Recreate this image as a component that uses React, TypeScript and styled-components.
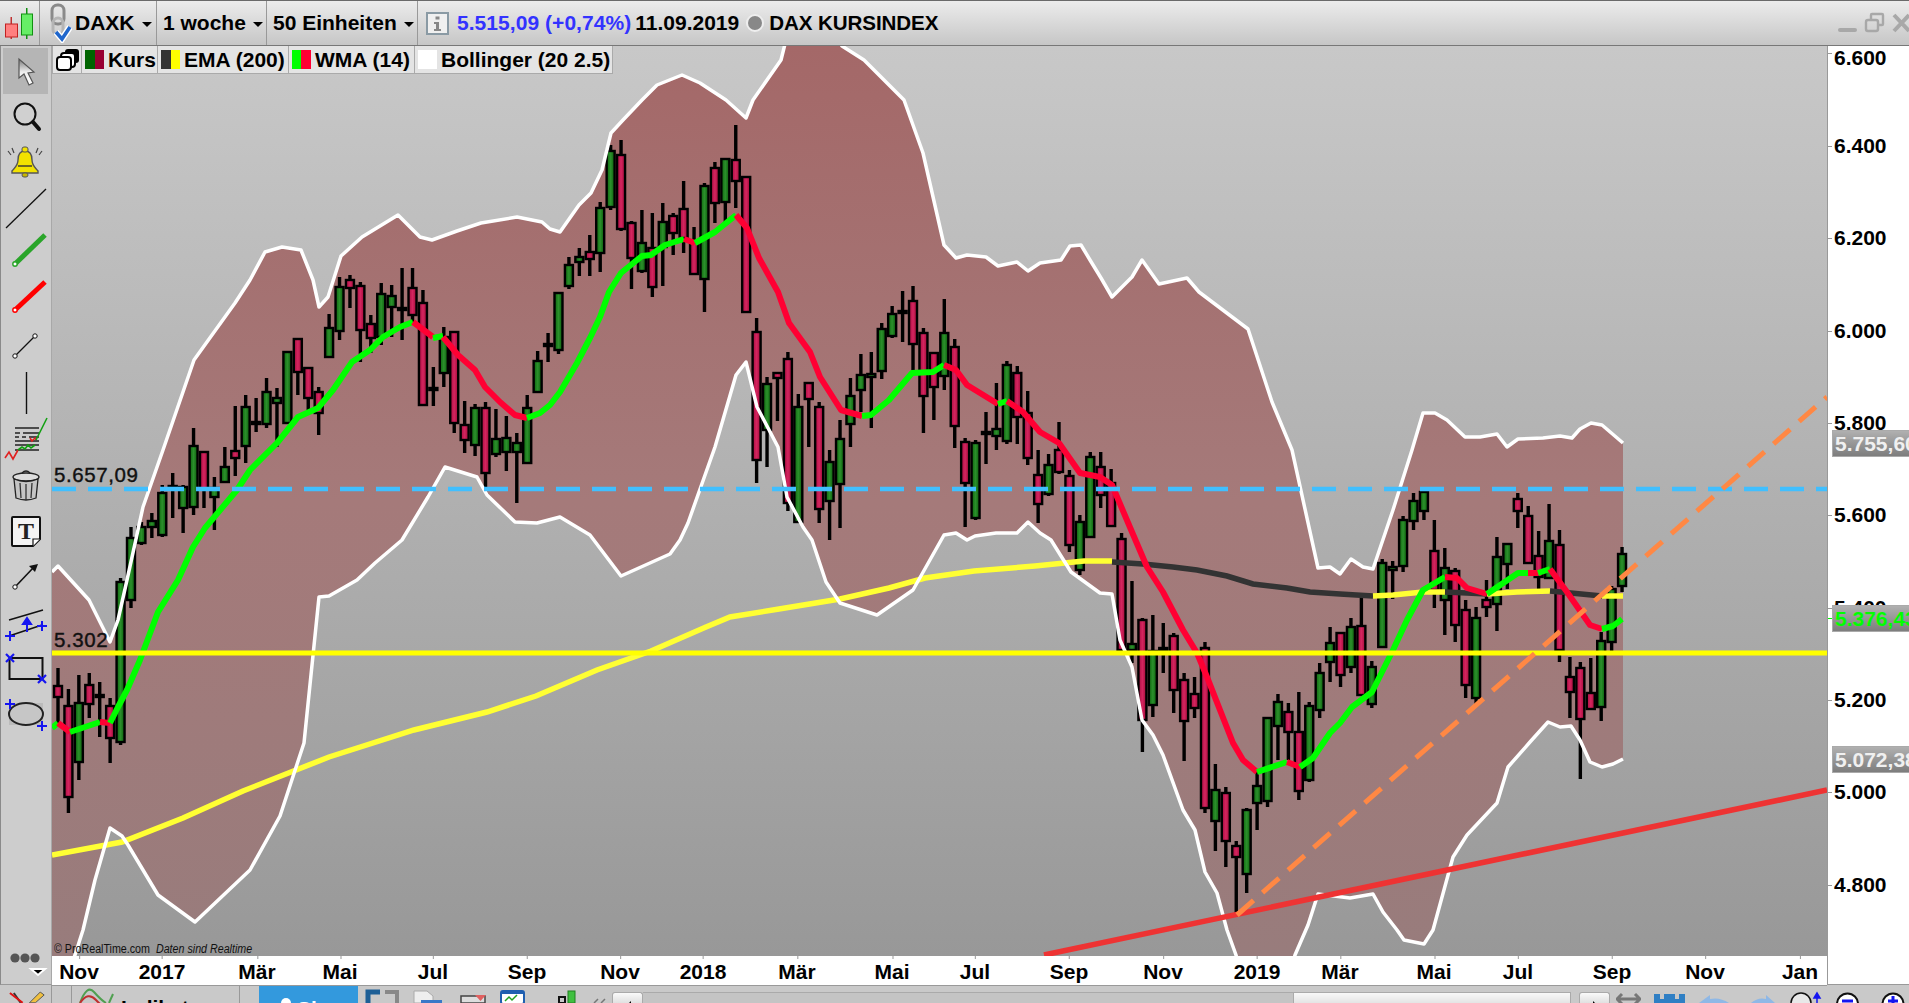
import styled, { createGlobalStyle } from "styled-components";

type Pt = [number, number];
type Seg = [string, Pt[]];
// colour, wick top, wick bottom, body top, body bottom
type Candle = ["g" | "r", number, number, number, number];

const GREEN = "#00ff00";
const RED = "#ff0033";
const YEL = "#ffff33";
const DARK = "#333333";
const BLUE = "#1515f0";

const CANDLES: Candle[] = [
    ["r", 668, 727, 686, 697], ["r", 689, 813, 706, 797], ["g", 675, 780, 703, 762], ["r", 673, 718, 685, 704],
    ["r", 682, 737, 695, 697], ["r", 698, 763, 706, 738], ["g", 578, 745, 582, 742], ["g", 527, 608, 538, 600],
    ["g", 522, 545, 527, 543], ["g", 513, 538, 521, 527], ["g", 485, 537, 493, 535], ["g", 473, 518, 486, 488],
    ["g", 485, 533, 487, 508], ["g", 428, 515, 446, 507], ["r", 452, 508, 452, 489], ["g", 477, 530, 488, 497],
    ["g", 447, 483, 467, 482], ["r", 406, 476, 451, 458], ["g", 395, 463, 407, 446], ["g", 398, 432, 422, 424],
    ["g", 378, 428, 392, 424], ["g", 388, 447, 398, 403], ["g", 352, 424, 352, 423], ["r", 339, 395, 339, 372],
    ["r", 368, 410, 368, 398], ["r", 387, 435, 392, 413], ["g", 314, 358, 328, 357], ["g", 277, 340, 287, 331],
    ["r", 275, 308, 280, 288], ["r", 282, 362, 286, 330], ["r", 315, 353, 324, 338], ["g", 283, 345, 294, 337],
    ["g", 285, 337, 296, 307], ["r", 268, 340, 308, 310], ["r", 268, 322, 288, 315], ["r", 290, 405, 303, 405],
    ["r", 367, 406, 388, 390], ["g", 327, 387, 337, 373], ["r", 332, 433, 332, 423], ["r", 401, 453, 425, 440],
    ["g", 404, 456, 408, 445], ["r", 402, 490, 408, 473], ["g", 409, 457, 439, 454], ["g", 416, 471, 438, 452],
    ["g", 433, 503, 443, 452], ["g", 395, 463, 408, 463], ["g", 351, 392, 361, 392], ["r", 333, 362, 344, 346],
    ["g", 293, 354, 293, 350], ["g", 257, 289, 265, 286], ["g", 248, 276, 257, 262], ["r", 235, 276, 252, 259],
    ["g", 202, 272, 208, 253], ["g", 145, 210, 151, 207], ["r", 140, 231, 155, 229], ["r", 221, 289, 223, 258],
    ["g", 210, 273, 243, 271], ["r", 213, 297, 248, 287], ["g", 203, 286, 222, 247], ["r", 213, 255, 216, 233],
    ["r", 181, 253, 209, 238], ["r", 227, 275, 242, 274], ["g", 183, 312, 186, 279], ["r", 162, 223, 168, 203],
    ["g", 158, 222, 159, 202], ["r", 125, 208, 160, 181], ["r", 177, 312, 177, 312], ["r", 318, 483, 332, 460],
    ["g", 377, 467, 384, 430], ["r", 372, 421, 373, 378], ["r", 352, 511, 359, 503], ["g", 394, 522, 407, 522],
    ["r", 383, 447, 383, 399], ["r", 402, 523, 407, 509], ["g", 450, 540, 462, 501], ["g", 420, 528, 439, 484],
    ["g", 378, 447, 396, 424], ["g", 354, 412, 375, 390], ["g", 352, 428, 374, 377], ["g", 323, 379, 329, 371],
    ["g", 306, 338, 314, 336], ["r", 291, 342, 311, 313], ["r", 286, 370, 301, 344], ["r", 328, 433, 333, 396],
    ["r", 352, 420, 353, 387], ["g", 299, 390, 333, 376], ["r", 339, 448, 347, 426], ["r", 438, 527, 442, 483],
    ["g", 440, 520, 443, 518], ["g", 412, 464, 432, 434], ["g", 383, 450, 429, 436], ["g", 361, 444, 365, 441],
    ["r", 366, 444, 373, 417], ["r", 391, 465, 413, 458], ["r", 450, 523, 475, 504], ["g", 454, 496, 465, 494],
    ["r", 422, 474, 450, 472], ["r", 470, 552, 476, 545], ["g", 515, 575, 522, 570], ["g", 452, 538, 457, 537],
    ["r", 452, 508, 467, 495], ["r", 469, 527, 483, 526], ["r", 533, 650, 539, 650], ["g", 581, 663, 644, 650],
    ["r", 618, 752, 620, 720], ["g", 615, 717, 651, 705], ["g", 623, 673, 648, 650], ["r", 633, 713, 636, 690],
    ["r", 673, 761, 680, 721], ["r", 677, 718, 694, 708], ["r", 642, 813, 648, 808], ["g", 764, 851, 790, 821],
    ["r", 787, 867, 793, 841], ["r", 841, 915, 846, 857], ["g", 808, 893, 810, 874], ["g", 772, 830, 786, 803],
    ["g", 717, 807, 718, 801], ["g", 694, 760, 702, 726], ["r", 703, 760, 712, 732], ["r", 692, 800, 732, 791],
    ["g", 702, 782, 706, 780], ["g", 663, 718, 673, 710], ["g", 627, 682, 643, 662], ["r", 633, 687, 633, 675],
    ["g", 618, 673, 627, 667], ["r", 598, 696, 626, 695], ["g", 661, 708, 667, 704], ["g", 559, 647, 563, 647],
    ["g", 561, 599, 567, 570], ["g", 516, 572, 520, 566], ["g", 493, 530, 501, 521], ["g", 489, 520, 492, 511],
    ["r", 520, 608, 551, 590], ["g", 548, 635, 568, 600], ["r", 568, 642, 571, 625], ["r", 600, 698, 610, 685],
    ["g", 607, 705, 618, 698], ["r", 580, 617, 600, 607], ["g", 537, 631, 557, 604], ["g", 543, 589, 544, 564],
    ["r", 493, 528, 499, 511], ["r", 506, 563, 516, 563], ["r", 531, 590, 556, 577], ["g", 504, 578, 541, 578],
    ["r", 530, 662, 545, 650], ["r", 657, 718, 677, 692], ["r", 662, 779, 668, 719], ["r", 658, 709, 693, 709],
    ["g", 632, 721, 641, 707], ["g", 586, 651, 589, 642], ["g", 547, 592, 554, 586],
];

const UPPER: Pt[] = [
    [52, 572], [58, 566], [89, 600], [110, 642], [118, 620], [127, 580], [143, 507], [163, 450], [194, 360],
    [235, 303], [250, 280], [265, 252], [282, 247], [301, 250], [313, 280], [319, 307], [328, 297], [341, 256],
    [362, 237], [398, 215], [420, 237], [432, 240], [457, 231], [481, 223], [517, 217], [542, 222], [550, 229],
    [560, 232], [579, 205], [591, 193], [602, 170], [611, 133], [623, 120], [642, 100], [657, 85], [682, 75],
    [700, 83], [726, 100], [746, 118], [753, 100], [781, 60], [785, 44], [838, 40], [842, 46], [864, 60], [904, 100],
    [923, 153], [944, 245], [956, 258], [967, 255], [986, 257], [998, 266], [1017, 262], [1028, 271], [1040, 263],
    [1061, 260], [1070, 246], [1081, 245], [1090, 260], [1101, 278], [1112, 297], [1132, 277], [1142, 260],
    [1159, 284], [1187, 278], [1199, 292], [1248, 329], [1272, 402], [1292, 450], [1318, 568], [1330, 567],
    [1340, 574], [1351, 559], [1363, 567], [1373, 569], [1393, 510], [1412, 450], [1423, 413], [1435, 413],
    [1447, 420], [1465, 437], [1480, 437], [1497, 434], [1507, 447], [1518, 439], [1543, 438], [1560, 436],
    [1572, 438], [1580, 429], [1591, 423], [1602, 425], [1623, 443],
];

const LOWER: Pt[] = [
    [52, 1010], [75, 955], [83, 930], [95, 880], [110, 828], [122, 836], [128, 845], [158, 895], [195, 922],
    [250, 870], [280, 816], [304, 743], [319, 597], [329, 596], [357, 580], [375, 563], [402, 540], [428, 497],
    [445, 467], [477, 477], [487, 495], [515, 522], [537, 523], [560, 517], [590, 535], [621, 576], [670, 554],
    [680, 540], [688, 523], [715, 447], [736, 375], [746, 362], [757, 407], [778, 447], [787, 497], [803, 527],
    [812, 540], [826, 582], [840, 603], [877, 615], [913, 590], [944, 535], [956, 533], [967, 540], [975, 536], [996, 533],
    [1017, 533], [1028, 522], [1040, 533], [1051, 540], [1071, 572], [1100, 593], [1112, 594], [1120, 640],
    [1132, 667], [1142, 720], [1153, 735], [1163, 755], [1183, 810], [1195, 830], [1205, 872], [1217, 893],
    [1227, 930], [1236, 955], [1245, 990], [1285, 990], [1295, 955], [1308, 925], [1318, 894], [1350, 898],
    [1373, 894], [1383, 912], [1397, 930], [1404, 940], [1424, 944], [1433, 930], [1453, 857], [1467, 835],
    [1497, 803], [1508, 767], [1530, 742], [1548, 722], [1560, 727], [1571, 726], [1580, 740], [1590, 762],
    [1602, 767], [1613, 764], [1623, 759],
];

const EMA: Seg[] = [
    [YEL, [[52, 855], [122, 842], [183, 818], [243, 791], [329, 757], [414, 730], [487, 712], [536, 696], [597, 670], [651, 651], [706, 627], [730, 617], [779, 609], [840, 599], [889, 588], [925, 578], [974, 571], [1035, 566], [1084, 561], [1112, 561]]],
    [DARK, [[1112, 562], [1143, 564], [1173, 567], [1197, 570], [1227, 576], [1253, 584], [1287, 588], [1310, 592], [1340, 594], [1373, 596]]],
    [YEL, [[1373, 596], [1393, 595], [1423, 592], [1445, 592]]],
    [DARK, [[1445, 592], [1467, 593], [1487, 594]]],
    [YEL, [[1487, 594], [1517, 592], [1550, 591]]],
    [DARK, [[1550, 591], [1602, 596]]],
    [YEL, [[1602, 596], [1623, 596]]],
];

const WMA: Seg[] = [
    [GREEN, [[52, 728], [58, 723]]],
    [RED, [[58, 723], [70, 732]]],
    [GREEN, [[70, 732], [100, 722]]],
    [RED, [[100, 722], [110, 723]]],
    [GREEN, [[110, 723], [118, 707], [127, 690], [140, 660], [158, 612], [178, 580], [193, 547], [205, 528], [237, 490], [250, 470], [277, 443], [298, 417], [318, 408], [333, 390], [352, 362], [370, 350], [383, 337], [400, 327], [413, 322]]],
    [RED, [[413, 322], [433, 337]]],
    [GREEN, [[433, 338], [443, 336]]],
    [RED, [[443, 337], [458, 355], [475, 370], [485, 387], [500, 402], [515, 415], [527, 418]]],
    [GREEN, [[527, 418], [540, 413], [550, 405], [560, 392], [577, 363], [590, 338], [600, 317], [609, 292], [621, 273], [642, 256], [651, 255], [665, 245], [684, 239]]],
    [RED, [[684, 239], [695, 243]]],
    [GREEN, [[695, 243], [715, 232], [736, 215]]],
    [RED, [[736, 215], [747, 228], [759, 258], [778, 292], [789, 323], [810, 352], [820, 377], [841, 410], [862, 416]]],
    [GREEN, [[862, 416], [871, 415], [889, 400], [912, 373], [933, 372], [944, 365]]],
    [RED, [[944, 365], [956, 370], [967, 385], [998, 404]]],
    [GREEN, [[998, 404], [1007, 401]]],
    [RED, [[1007, 401], [1023, 412], [1040, 432], [1059, 443], [1080, 473], [1100, 477], [1112, 485], [1132, 532], [1147, 567], [1163, 592], [1183, 630], [1197, 653], [1207, 677], [1233, 743], [1243, 760], [1257, 772]]],
    [GREEN, [[1257, 772], [1287, 762]]],
    [RED, [[1287, 762], [1300, 767]]],
    [GREEN, [[1300, 767], [1313, 758], [1330, 733], [1340, 723], [1352, 707], [1372, 692], [1393, 650], [1407, 620], [1423, 590], [1445, 577]]],
    [RED, [[1445, 577], [1457, 578], [1467, 588], [1487, 594]]],
    [GREEN, [[1487, 594], [1518, 573], [1528, 573]]],
    [RED, [[1528, 573], [1538, 573]]],
    [GREEN, [[1538, 573], [1550, 569]]],
    [RED, [[1550, 569], [1567, 592], [1590, 625], [1602, 629]]],
    [GREEN, [[1602, 629], [1613, 626], [1622, 619]]],
];

const Y_TICKS: { y: number; label: string; labelY?: number }[] = [
    { y: 53, label: "6.600", labelY: 58 }, { y: 146, label: "6.400" }, { y: 238, label: "6.200" }, { y: 331, label: "6.000" },
    { y: 423, label: "5.800" }, { y: 515, label: "5.600" }, { y: 608, label: "5.400" }, { y: 700, label: "5.200" },
    { y: 792, label: "5.000" }, { y: 885, label: "4.800" },
];

const X_TICKS: [number, string][] = [
    [79, "Nov"], [162, "2017"], [257, "Mär"], [340, "Mai"], [433, "Jul"], [527, "Sep"], [620, "Nov"], [703, "2018"],
    [797, "Mär"], [892, "Mai"], [975, "Jul"], [1069, "Sep"], [1163, "Nov"], [1257, "2019"], [1340, "Mär"], [1434, "Mai"],
    [1518, "Jul"], [1612, "Sep"], [1705, "Nov"], [1800, "Jan"],
];

const pts = (p: Pt[]) => p.map((q) => q.join(",")).join(" ");

function App() {
    return (
        <Page>
            <GlobalStyle />
            <TopBar>
                <TopCell $w={40}>
                    <svg width="36" height="44" viewBox="0 1 36 44">
                        <rect x="10.5" y="17" width="1.5" height="22" fill="#c03030" />
                        <rect x="5.5" y="24" width="12" height="13" fill="#ff7f7f" stroke="#c02020" />
                        <rect x="26" y="8" width="1.5" height="31" fill="#109010" />
                        <rect x="21.5" y="14" width="11" height="21" fill="#66ee66" stroke="#109010" />
                    </svg>
                </TopCell>
                <TopCell $w={117} $pad={8} $gap={3}>
                    <svg width="24" height="40" viewBox="0 0 24 40">
                        <rect x="4" y="2" width="12" height="19" rx="5.5" fill="none" stroke="#8a8a8a" strokeWidth="3" />
                        <rect x="5" y="15" width="10" height="17" rx="5" fill="none" stroke="#b5b5b5" strokeWidth="3" />
                        <path d="M8 29l6 7L22 24" fill="none" stroke="#fff" strokeWidth="6.5" />
                        <path d="M8 29l6 7L22 24" fill="none" stroke="#1f66cc" strokeWidth="3.5" />
                    </svg>
                    <TopText>DAXK</TopText>
                    <Caret />
                </TopCell>
                <TopCell $w={110} $pad={6}>
                    <TopText>1 woche</TopText>
                    <Caret />
                </TopCell>
                <TopCell $w={151} $pad={6}>
                    <TopText>50 Einheiten</TopText>
                    <Caret />
                </TopCell>
                <InfoCell>
                    <svg width="23" height="23" viewBox="0 0 23 23">
                        <rect x="1" y="1" width="21" height="21" fill="#f0f0f0" stroke="#8a9aa4" strokeWidth="2" />
                        <rect x="9.5" y="4.5" width="4" height="3" fill="#888" />
                        <path d="M8 10h5v7h2v2H8v-2h2v-5H8z" fill="#888" />
                    </svg>
                    <Quote>5.515,09 (+0,74%)</Quote>
                    <TopText>11.09.2019</TopText>
                    <StatusDot />
                    <Instrument>DAX KURSINDEX</Instrument>
                </InfoCell>
                <WindowButtons>
                    <svg width="71" height="46" viewBox="1838 0 71 46">
                        <rect x="1838" y="28" width="19" height="4" rx="2" fill="#a8a8a8" />
                        <g fill="none" stroke="#a8a8a8" strokeWidth="2.4">
                            <rect x="1866" y="20" width="12" height="11" rx="2" />
                            <path d="M1871 20v-5a1 1 0 0 1 1-1h10a1 1 0 0 1 1 1v9a1 1 0 0 1-1 1h-4" />
                        </g>
                        <path d="M1894 15l15 16M1909 15l-15 16" stroke="#a8a8a8" strokeWidth="4" />
                    </svg>
                </WindowButtons>
            </TopBar>
            <Middle>
                <ToolBar>
                    <ToolList>
                        <Tool $active $top={48} $h={46}>
                            <defs>
                                <linearGradient id="ptr" x1="0" y1="0" x2="0" y2="1">
                                    <stop offset="0" stopColor="#777" />
                                    <stop offset="0.5" stopColor="#eee" />
                                    <stop offset="1" stopColor="#fff" />
                                </linearGradient>
                            </defs>
                            <path d="M19 59v19l5-4 5 11 4-2-5-10 6-1z" fill="url(#ptr)" stroke="#555" strokeWidth="1.2" />
                        </Tool>
                        <Tool $top={94} $h={46}>
                            <circle cx="25" cy="114" r="10.5" fill="#d0d0d0" stroke="#111" strokeWidth="2" />
                            <path d="M33 122l6 7" stroke="#111" strokeWidth="4" strokeLinecap="round" />
                        </Tool>
                        <Tool $top={140} $h={44}>
                            <path d="M25 151c-6 0-7 5-7 9 0 6-4 8-6 11v2h26v-2c-2-3-6-5-6-11 0-4-1-9-7-9z" fill="#f2e200" stroke="#555" strokeWidth="1.4" />
                            <rect x="22" y="147" width="6" height="5" rx="2" fill="#f2e200" stroke="#555" />
                            <rect x="22" y="173" width="6" height="4" rx="2" fill="#c8b800" stroke="#555" />
                            <path d="M18 166h14" stroke="#333" strokeWidth="1.4" />
                            <path d="M8 151l3 4M12 148l2 5M42 151l-3 4M38 148l-2 5" stroke="#444" strokeWidth="1.2" />
                        </Tool>
                        <Tool $top={184} $h={48}>
                            <path d="M6 228l40-39" stroke="#111" strokeWidth="1.3" />
                        </Tool>
                        <Tool $top={232} $h={38}>
                            <path d="M15 264l30-29" stroke="#2aa52a" strokeWidth="5" />
                            <circle cx="15" cy="264" r="2.2" fill="#fff" stroke="#2aa52a" strokeWidth="1.4" />
                        </Tool>
                        <Tool $top={270} $h={50}>
                            <path d="M15 310l30-28" stroke="#ff0000" strokeWidth="5" />
                            <circle cx="15" cy="310" r="2.2" fill="#fff" stroke="#ff0000" strokeWidth="1.4" />
                        </Tool>
                        <Tool $top={320} $h={50}>
                            <path d="M15 356l20-20" stroke="#111" strokeWidth="1.3" />
                            <circle cx="15" cy="356" r="2.2" fill="#fff" stroke="#111" />
                            <circle cx="35" cy="336" r="2.2" fill="#fff" stroke="#111" />
                        </Tool>
                        <Tool $top={370} $h={46}>
                            <path d="M26.5 372v42" stroke="#111" strokeWidth="1.4" />
                        </Tool>
                        <Tool $top={416} $h={48}>
                            <path d="M15 428h24M15 433h5M23 433h16M15 437h4M22 437h4M29 437h10M15 441h24M15 445h24M15 450h24" stroke="#222" strokeWidth="1.6" />
                            <path d="M5 458l4-6 4 7 5-9" fill="none" stroke="#e02020" strokeWidth="1.6" />
                            <path d="M18 450l4-3 3 2 3-4 3 3 4-3" fill="none" stroke="#10a010" strokeWidth="1.6" />
                            <path d="M30 438l2 3 3-3 1 2" fill="none" stroke="#e02020" strokeWidth="1.6" />
                            <path d="M36 440l4-8 3-6 4-8" fill="none" stroke="#10a010" strokeWidth="1.6" />
                        </Tool>
                        <Tool $top={464} $h={42}>
                            <ellipse cx="26" cy="477" rx="13" ry="4" fill="#ddd" stroke="#222" strokeWidth="1.3" />
                            <path d="M22 473q4-4 8 0" fill="none" stroke="#222" strokeWidth="1.3" />
                            <path d="M14 479l2 19q10 4 20 0l2-19q-12 5-24 0z" fill="#c4c4c4" stroke="#222" strokeWidth="1.3" />
                            <path d="M20 483l1 15M26 484v16M32 483l-1 15" stroke="#333" strokeWidth="1.3" />
                        </Tool>
                        <Tool $top={506} $h={46}>
                            <path d="M13 517h26a1 1 0 0 1 1 1v21l-7 7H13a1 1 0 0 1-1-1v-27a1 1 0 0 1 1-1z" fill="#f4f4f4" stroke="#111" strokeWidth="2" />
                            <path d="M33 546v-7h7" fill="#fff" stroke="#111" strokeWidth="1.2" />
                            <IconLetter x="26" y="539" textAnchor="middle">T</IconLetter>
                        </Tool>
                        <Tool $top={552} $h={48}>
                            <path d="M15 587l19-20" stroke="#111" strokeWidth="1.6" />
                            <path d="M38 564l-9 2 6 6z" fill="#111" />
                            <circle cx="15" cy="587" r="2.2" fill="#fff" stroke="#111" />
                        </Tool>
                        <Tool $top={600} $h={48}>
                            <path d="M9 620l34-10M9 636l33-11" stroke="#111" strokeWidth="1.5" />
                            <path d="M27 632v-10M23 624l4-6 4 6z" stroke={BLUE} strokeWidth="2" fill={BLUE} />
                            <path d="M5 636h10M10 631v10M37 626h10M42 621v10" stroke={BLUE} strokeWidth="2" />
                        </Tool>
                        <Tool $top={648} $h={48}>
                            <rect x="9.5" y="658" width="33" height="21" fill="none" stroke="#111" strokeWidth="2" />
                            <path d="M6 654l8 8M14 654l-8 8M38 675l8 8M46 675l-8 8" stroke={BLUE} strokeWidth="2.2" />
                        </Tool>
                        <Tool $top={696} $h={48}>
                            <rect x="9" y="703" width="34" height="22" fill="#bbb" />
                            <ellipse cx="26" cy="714" rx="17" ry="11" fill="#c6c6c6" stroke="#222" strokeWidth="2" />
                            <path d="M5 704h10M10 699v10M37 726h10M42 721v10" stroke={BLUE} strokeWidth="2" />
                        </Tool>
                    </ToolList>
                    <MoreButton>
                        <svg width="40" height="34" viewBox="0 0 40 34">
                            <circle cx="5" cy="8" r="4.6" fill="#555" />
                            <circle cx="15" cy="8" r="4.6" fill="#555" />
                            <circle cx="25" cy="8" r="4.6" fill="#555" />
                            <path d="M21 19h14l-7 6z" fill="#000" stroke="#fff" strokeWidth="2" />
                        </svg>
                    </MoreButton>
                </ToolBar>
                <ChartColumn>
                    <Plot>
                        <ChartSvg viewBox="52 46 1775 910" width="1775" height="910">
                            <defs>
                                <linearGradient id="band" gradientUnits="userSpaceOnUse" x1="0" y1="46" x2="0" y2="956">
                                    <stop offset="0" stopColor="#a46868" />
                                    <stop offset="0.5" stopColor="#a57a7a" />
                                    <stop offset="1" stopColor="#987c7c" />
                                </linearGradient>
                                <linearGradient id="gc">
                                    <stop offset="0" stopColor="#0c660c" />
                                    <stop offset="0.5" stopColor="#2c902c" />
                                    <stop offset="1" stopColor="#0a5c0a" />
                                </linearGradient>
                                <linearGradient id="rc">
                                    <stop offset="0" stopColor="#a80c40" />
                                    <stop offset="0.5" stopColor="#d4255f" />
                                    <stop offset="1" stopColor="#a00a38" />
                                </linearGradient>
                            </defs>
                            <polygon points={pts([...UPPER, ...[...LOWER].reverse()])} fill="url(#band)" />
                            {CANDLES.map(([c, wt, wb, bt, bb], i) => {
                                const x = 58 + i * 10.427;
                                return (
                                    <g key={i}>
                                        <rect x={x - 1.7} y={wt} width="3.4" height={wb - wt} fill="#000" />
                                        <rect x={x - 4} y={bt} width="8" height={Math.max(bb - bt, 1)} fill={`url(#${c}c)`} stroke="#000" strokeWidth="2.4" />
                                    </g>
                                );
                            })}
                            {EMA.map(([c, p], i) => (
                                <polyline key={i} points={pts(p)} fill="none" stroke={c} strokeWidth="5.5" />
                            ))}
                            <polyline points={pts(UPPER)} fill="none" stroke="#fff" strokeWidth="3.5" strokeLinejoin="round" />
                            <polyline points={pts(LOWER)} fill="none" stroke="#fff" strokeWidth="3.5" strokeLinejoin="round" />
                            {WMA.map(([c, p], i) => (
                                <polyline key={i} points={pts(p)} fill="none" stroke={c} strokeWidth="6" strokeLinejoin="round" />
                            ))}
                            <path d="M52 489H1827" stroke="#40bfff" strokeWidth="4.5" strokeDasharray="24 12" />
                            <path d="M52 653H1827" stroke="#ffff00" strokeWidth="5" />
                            <path d="M1044 955L1827 790" stroke="#ee3333" strokeWidth="5.5" />
                            <path d="M1237 915L1827 397" stroke="#ff8844" strokeWidth="5" strokeDasharray="22 12" />
                            <LevelText x="54" y="482">5.657,09</LevelText>
                            <LevelText x="54" y="647">5.302</LevelText>
                        </ChartSvg>
                        <Legend>
                            <LegendIcon>
                                <svg width="24" height="24" viewBox="0 0 24 24">
                                    <rect x="9" y="2" width="14" height="14" rx="3" fill="#000" />
                                    <rect x="5" y="6" width="14" height="14" rx="3" fill="#fff" stroke="#000" strokeWidth="2" />
                                    <rect x="1" y="10" width="14" height="13" rx="3" fill="#fff" stroke="#000" strokeWidth="2" />
                                </svg>
                            </LegendIcon>
                            <LegendItem $w={76}>
                                <Swatch $a="#006400" $b="#990033" />
                                Kurs
                            </LegendItem>
                            <LegendItem $w={131}>
                                <Swatch $a="#333333" $b="#ffff00" />
                                EMA (200)
                            </LegendItem>
                            <LegendItem $w={126}>
                                <Swatch $a="#00ff00" $b="#ff0033" />
                                WMA (14)
                            </LegendItem>
                            <LegendItem $w={198}>
                                <Swatch $a="#ffffff" $b="#ffffff" />
                                Bollinger (20 2.5)
                            </LegendItem>
                        </Legend>
                        <Copyright>
                            © ProRealTime.com <em>Daten sind Realtime</em>
                        </Copyright>
                    </Plot>
                    <XAxis>
                        {X_TICKS.map(([x, label], i) => (
                            <XTick key={i} style={{ left: x - 52 }}>
                                {label}
                            </XTick>
                        ))}
                    </XAxis>
                </ChartColumn>
                <YAxis>
                    {Y_TICKS.map((t) => (
                        <YTick key={t.label} style={{ top: t.y - 46 }} />
                    ))}
                    {Y_TICKS.map((t) => (
                        <YLabel key={t.label} style={{ top: (t.labelY ?? t.y) - 46 }}>
                            {t.label}
                        </YLabel>
                    ))}
                    <PriceTag style={{ top: 430 - 46 }}>5.755,60</PriceTag>
                    <PriceTag $green style={{ top: 605 - 46 }}>5.376,43</PriceTag>
                    <GreenTick />
                    <PriceTag style={{ top: 746 - 46 }}>5.072,38</PriceTag>
                </YAxis>
            </Middle>
            <BottomBar>
                <BottomCell $w={52}>
                    <svg width="46" height="18" viewBox="6 0 46 18">
                        <path d="M14 8l7 10" stroke="#333" strokeWidth="2" />
                        <path d="M10 8l13 10" stroke="#e01010" strokeWidth="2" />
                        <path d="M30 18l11-11 4 3-9 8z" fill="#f0c040" stroke="#555" />
                    </svg>
                </BottomCell>
                <BottomCell $w={20} />
                <BottomCell $w={168} $gap={5}>
                    <svg width="38" height="18" viewBox="0 0 38 18">
                        <path d="M2 18q7-19 14-11t12 11" fill="none" stroke="#50a050" strokeWidth="2" />
                        <path d="M2 18q8-12 16-3t10 3" fill="none" stroke="#c03030" strokeWidth="2" />
                        <path d="M31 18l4-9" stroke="#50a050" strokeWidth="2" />
                    </svg>
                    <BarText>Indikatoren</BarText>
                </BottomCell>
                <ShareButton>
                    <svg width="22" height="18" viewBox="0 0 22 18">
                        <circle cx="11" cy="18" r="5" fill="#fff" />
                    </svg>
                    Share
                </ShareButton>
                <BarIcon width="34" height="18" viewBox="0 0 34 18" $ml={7}>
                    <path d="M15 7H3v11" fill="none" stroke="#1d5f96" strokeWidth="5" />
                    <path d="M20 7h12v11" fill="none" stroke="#888" strokeWidth="4" />
                </BarIcon>
                <BarIcon width="30" height="18" viewBox="0 0 30 18" $ml={13}>
                    <path d="M2 6h13l6 5v7H2z" fill="#eee" stroke="#aaa" />
                    <rect x="9" y="15" width="21" height="3" fill="#3a78c8" />
                </BarIcon>
                <BarIcon width="27" height="18" viewBox="0 0 27 18" $ml={18}>
                    <rect x="1" y="11" width="24" height="7" fill="#ddd" stroke="#444" strokeWidth="1.5" />
                    <path d="M15 10h11l-5.500 6z" fill="#e06060" />
                </BarIcon>
                <BarIcon width="25" height="18" viewBox="0 0 25 18" $ml={13}>
                    <rect x="1" y="6" width="23" height="13" rx="2" fill="#fff" stroke="#1f5fb0" strokeWidth="2" />
                    <rect x="1" y="6" width="23" height="3" fill="#1f5fb0" />
                    <path d="M5 16l4-4 3 3 5-5" fill="none" stroke="#20a020" strokeWidth="1.5" />
                </BarIcon>
                <BarIcon width="18" height="18" viewBox="0 0 18 18" $ml={33}>
                    <rect x="10" y="6" width="7" height="12" fill="#40c040" stroke="#208020" />
                    <rect x="1" y="12" width="6" height="6" fill="none" stroke="#111" strokeWidth="2" />
                </BarIcon>
                <BarIcon width="16" height="18" viewBox="0 0 16 18" $ml={15}>
                    <path d="M7 14l-4 4M14 14l-4 4" stroke="#777" strokeWidth="1.5" fill="none" />
                </BarIcon>
                <ScrollArrow $ml={5}>
                    <svg width="10" height="11" viewBox="0 0 10 11">
                        <path d="M7 5v6H1z" fill="#000" />
                    </svg>
                </ScrollArrow>
                <ScrollTrack $w={928}>
                    <ScrollThumb />
                </ScrollTrack>
                <ScrollArrow $ml={8}>
                    <svg width="10" height="11" viewBox="0 0 10 11">
                        <path d="M2 5l6 6H2z" fill="#000" />
                    </svg>
                </ScrollArrow>
                <BarIcon width="25" height="18" viewBox="0 0 25 18" $ml={6}>
                    <path d="M1 14h23M6 9l-5 5 5 5M19 9l5 5-5 5" fill="none" stroke="#777" strokeWidth="3" />
                </BarIcon>
                <BarIcon width="31" height="18" viewBox="0 0 31 18" $ml={13}>
                    <rect x="0" y="9" width="31" height="9" fill="#2f7fc4" />
                    <rect x="6" y="7" width="4" height="7" fill="#c8c8c8" />
                    <rect x="21" y="7" width="4" height="7" fill="#c8c8c8" />
                </BarIcon>
                <BarIcon width="32" height="18" viewBox="0 0 32 18" $ml={13}>
                    <path d="M1 18l11-8v4q10-2 19 4z" fill="#8fb8e6" />
                </BarIcon>
                <BarIcon width="26" height="18" viewBox="0 0 26 18" $ml={20}>
                    <path d="M25 18l-9-8v4Q8 12 1 18z" fill="#8fb8e6" />
                </BarIcon>
                <BarIcon width="32" height="18" viewBox="0 0 32 18" $ml={14}>
                    <circle cx="11" cy="18" r="10" fill="#e8e8e8" stroke="#111" strokeWidth="1.5" />
                    <path d="M27 18V12M24 13l3-5 3 5z" stroke={BLUE} fill={BLUE} strokeWidth="1.5" />
                </BarIcon>
                <BarIcon width="23" height="18" viewBox="0 0 23 18" $ml={14}>
                    <circle cx="11.500" cy="19" r="10.500" fill="#fff" stroke="#111" strokeWidth="2" />
                    <path d="M6 16h11" stroke={BLUE} strokeWidth="3" />
                </BarIcon>
                <BarIcon width="24" height="18" viewBox="0 0 24 18" $ml={22}>
                    <circle cx="12" cy="19" r="10.500" fill="#fff" stroke="#111" strokeWidth="2" />
                    <path d="M7 16h10M12 11v7" stroke={BLUE} strokeWidth="3" />
                </BarIcon>
            </BottomBar>
        </Page>
    );
}

const GlobalStyle = createGlobalStyle`
    html, body {
        margin: 0;
        padding: 0;
        overflow: hidden;
        background: #c8c8c8;
    }
    body {
        font-family: "Liberation Sans", Arial, sans-serif;
    }
`;

const Page = styled.div`
    width: 1909px;
    height: 1003px;
    display: flex;
    flex-direction: column;
    overflow: hidden;
    color: #000;
`;

const TopBar = styled.div`
    height: 46px;
    flex: none;
    box-sizing: border-box;
    display: flex;
    align-items: stretch;
    border-top: 1px solid #6a6a6a;
    border-bottom: 1px solid #777;
    background: linear-gradient(#ececec, #c6c6c6);
`;

const TopCell = styled.div<{ $w: number; $pad?: number; $gap?: number }>`
    width: ${(p) => p.$w}px;
    flex: none;
    box-sizing: border-box;
    display: flex;
    align-items: center;
    padding-left: ${(p) => p.$pad ?? 0}px;
    border-right: 1px solid #999;
    & > svg + span {
        margin-left: ${(p) => p.$gap ?? 0}px;
    }
`;

const TopText = styled.span`
    font-size: 21px;
    font-weight: 700;
    white-space: nowrap;
`;

const Caret = styled.i`
    margin-left: 7px;
    margin-top: 2px;
    width: 0;
    height: 0;
    border-left: 5px solid transparent;
    border-right: 5px solid transparent;
    border-top: 5px solid #000;
`;

const InfoCell = styled.div`
    display: flex;
    align-items: center;
    padding-left: 8px;
    flex: 1;
`;

const Quote = styled(TopText)`
    color: #3333ff;
    margin: 0 4px 0 8px;
    letter-spacing: 0.05px;
`;

const Instrument = styled(TopText)`
    font-size: 20.6px;
    letter-spacing: -0.1px;
`;

const StatusDot = styled.i`
    width: 14px;
    height: 14px;
    margin: 0 5px 0 7px;
    border-radius: 50%;
    background: #888;
    border: 2px solid #eee;
`;

const WindowButtons = styled.div`
    width: 71px;
    flex: none;
    display: flex;
    margin-top: -1px;
`;

const Middle = styled.div`
    flex: none;
    height: 939px;
    display: flex;
`;

const ToolBar = styled.div`
    width: 52px;
    flex: none;
    box-sizing: border-box;
    display: flex;
    flex-direction: column;
    justify-content: space-between;
    background: #cdcdcd;
    border-left: 1px solid #8a8a8a;
    border-right: 1px solid #a8a8a8;
    border-bottom: 1px solid #999;
    padding-top: 2px;
`;

const ToolList = styled.div`
    display: flex;
    flex-direction: column;
`;

const ToolSvg = styled.svg<{ $active?: boolean }>`
    display: block;
    flex: none;
    margin-left: -1px;
    ${(p) => p.$active && "background: linear-gradient(90deg, transparent 3px, #b5b5b5 3px, #b5b5b5 48px, transparent 48px);"}
`;

function Tool({ $top, $h, $active, children }: { $top: number; $h: number; $active?: boolean; children: React.ReactNode }) {
    return (
        <ToolSvg $active={$active} width="50" height={$h} viewBox={`0 ${$top} 50 ${$h}`}>
            {children}
        </ToolSvg>
    );
}

const IconLetter = styled.text`
    font-family: "Liberation Serif", serif;
    font-weight: 700;
    font-size: 24px;
    fill: #222;
`;

const MoreButton = styled.div`
    height: 34px;
    padding-left: 9px;
`;

const ChartColumn = styled.div`
    width: 1775px;
    flex: none;
    display: flex;
    flex-direction: column;
`;

const Plot = styled.div`
    position: relative;
    height: 910px;
    flex: none;
    overflow: hidden;
    background: linear-gradient(#c8c8c8, #989898);
`;

const ChartSvg = styled.svg`
    display: block;
`;

const LevelText = styled.text`
    font-size: 20.5px;
    letter-spacing: 0.6px;
    fill: #111;
    stroke: #111;
    stroke-width: 0.4px;
`;

const Legend = styled.div`
    position: absolute;
    top: 0;
    left: 0;
    height: 27px;
    display: flex;
    background: #e4e4e4;
    border-bottom: 1px solid #aaa;
`;

const LegendIcon = styled.div`
    width: 30px;
    box-sizing: border-box;
    padding: 1px 0 0 3px;
    border-right: 1px solid #aaa;
    border-left: 1px solid #aaa;
`;

const LegendItem = styled.div<{ $w: number }>`
    width: ${(p) => p.$w}px;
    box-sizing: border-box;
    display: flex;
    align-items: center;
    gap: 4px;
    padding-left: 3px;
    border-right: 1px solid #aaa;
    font-size: 21px;
    font-weight: 700;
    white-space: nowrap;
`;

const Swatch = styled.i<{ $a: string; $b: string }>`
    width: 19px;
    height: 19px;
    flex: none;
    background: linear-gradient(90deg, ${(p) => p.$a} 50%, ${(p) => p.$b} 50%);
`;

const Copyright = styled.div`
    position: absolute;
    left: 2px;
    bottom: 1px;
    font-size: 10.7px;
    color: #111;
    white-space: pre;
    transform: scaleY(1.15);
    transform-origin: left bottom;
    & em {
        margin-left: 3px;
    }
`;

const XAxis = styled.div`
    position: relative;
    height: 29px;
    flex: none;
    background: #fff;
    border-bottom: 1px solid #999;
`;

const XTick = styled.div`
    position: absolute;
    top: 0;
    transform: translateX(-50%);
    padding-top: 4px;
    font-size: 21px;
    font-weight: 700;
    line-height: 24px;
    &::before {
        content: "";
        position: absolute;
        top: 0;
        left: 50%;
        width: 1px;
        height: 3px;
        background: #999;
    }
`;

const YAxis = styled.div`
    position: relative;
    flex: 1;
    overflow: hidden;
    box-sizing: border-box;
    background: #fff;
    border-left: 1px solid #999;
    border-bottom: 1px solid #999;
`;

const YTick = styled.i`
    position: absolute;
    left: 0;
    width: 4px;
    height: 1px;
    background: #999;
`;

const YLabel = styled.div`
    position: absolute;
    left: 6px;
    transform: translateY(-50%);
    font-size: 21px;
    font-weight: 700;
    line-height: 24px;
`;

const PriceTag = styled.div<{ $green?: boolean }>`
    position: absolute;
    left: 4px;
    height: 27px;
    width: 90px;
    box-sizing: border-box;
    padding-left: 2px;
    border: 1px solid #aaa;
    border-right: 0;
    background: linear-gradient(#b0b0b0, #7d7d7d);
    color: ${(p) => (p.$green ? "#00ff00" : "#f0f0f0")};
    font-size: 21px;
    font-weight: 700;
    line-height: 25px;
    white-space: nowrap;
`;

const GreenTick = styled.i`
    position: absolute;
    left: 0;
    top: 572px;
    width: 4px;
    height: 1px;
    background: #00ff00;
`;

const BottomBar = styled.div`
    height: 18px;
    flex: none;
    display: flex;
    background: #c9c9c9;
    overflow: hidden;
`;

const BottomCell = styled.div<{ $w: number; $gap?: number }>`
    width: ${(p) => p.$w}px;
    flex: none;
    box-sizing: border-box;
    display: flex;
    gap: ${(p) => p.$gap ?? 0}px;
    padding-left: 6px;
    border-right: 1px solid #999;
`;

const BarText = styled.span`
    margin-top: 11px;
    font-size: 21px;
    font-weight: 700;
    line-height: 24px;
    height: 24px;
`;

const ShareButton = styled.div`
    width: 99px;
    flex: none;
    margin-left: 19px;
    padding-left: 16px;
    box-sizing: border-box;
    display: flex;
    background: #3399dd;
    color: #fff;
    font-size: 21px;
    font-weight: 700;
    line-height: 48px;
`;

const BarIcon = styled.svg<{ $ml: number }>`
    flex: none;
    display: block;
    margin-left: ${(p) => p.$ml}px;
`;

const ScrollArrow = styled.div<{ $ml: number }>`
    width: 31px;
    flex: none;
    box-sizing: border-box;
    margin-left: ${(p) => p.$ml}px;
    margin-top: 7px;
    padding-left: 11px;
    background: linear-gradient(#fafafa, #e0e0e0);
    border: 1px solid #aaa;
    border-bottom: 0;
    border-radius: 3px 3px 0 0;
`;

const ScrollTrack = styled.div<{ $w: number }>`
    width: ${(p) => p.$w}px;
    flex: none;
    display: flex;
    justify-content: flex-end;
    margin-top: 7px;
    border-top: 1px solid #aaa;
    background: #c4c4c4;
`;

const ScrollThumb = styled.div`
    width: 276px;
    background: linear-gradient(#f8f8f8, #e4e4e4);
    border-left: 1px solid #aaa;
    border-right: 1px solid #aaa;
`;

export default App;
